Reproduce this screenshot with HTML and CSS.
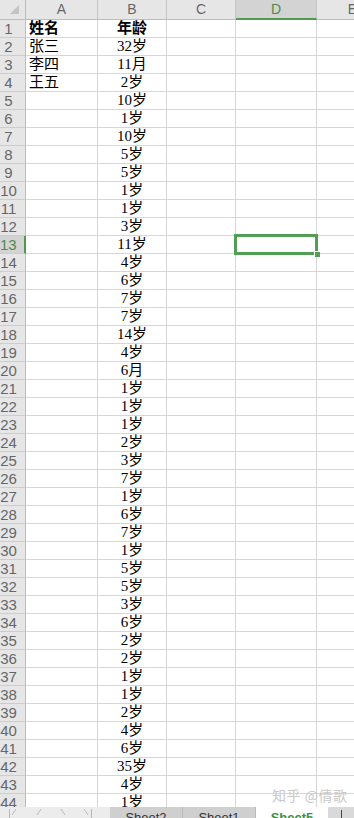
FILE: index.html
```html
<!DOCTYPE html>
<html lang="zh-CN">

<head>
    <meta charset="UTF-8">
    <meta name="viewport" content="width=device-width, initial-scale=1.0">
    <title>Sheet5</title>
    <link rel="stylesheet" href="styles.css">
</head>

<body>
    <div class="book">
        <div class="grid">
            <div class="row head">
                <div class="corner">
                    <svg width="26" height="19" viewBox="0 0 26 19"><polygon points="19,5 19,14 10,14" fill="#c4c4c4"/></svg>
                </div>
                <div class="ch">A</div>
                <div class="ch">B</div>
                <div class="ch">C</div>
                <div class="ch sel">D</div>
                <div class="ch">E</div>
            </div>
            <div class="row"><div class="rh">1</div><div class="c b">姓名</div><div class="c m b">年龄</div><div class="c"></div><div class="c"></div><div class="c"></div></div>
            <div class="row"><div class="rh">2</div><div class="c">张三</div><div class="c m">32岁</div><div class="c"></div><div class="c"></div><div class="c"></div></div>
            <div class="row"><div class="rh">3</div><div class="c">李四</div><div class="c m">11月</div><div class="c"></div><div class="c"></div><div class="c"></div></div>
            <div class="row"><div class="rh">4</div><div class="c">王五</div><div class="c m">2岁</div><div class="c"></div><div class="c"></div><div class="c"></div></div>
            <div class="row"><div class="rh">5</div><div class="c"></div><div class="c m">10岁</div><div class="c"></div><div class="c"></div><div class="c"></div></div>
            <div class="row"><div class="rh">6</div><div class="c"></div><div class="c m">1岁</div><div class="c"></div><div class="c"></div><div class="c"></div></div>
            <div class="row"><div class="rh">7</div><div class="c"></div><div class="c m">10岁</div><div class="c"></div><div class="c"></div><div class="c"></div></div>
            <div class="row"><div class="rh">8</div><div class="c"></div><div class="c m">5岁</div><div class="c"></div><div class="c"></div><div class="c"></div></div>
            <div class="row"><div class="rh">9</div><div class="c"></div><div class="c m">5岁</div><div class="c"></div><div class="c"></div><div class="c"></div></div>
            <div class="row"><div class="rh">10</div><div class="c"></div><div class="c m">1岁</div><div class="c"></div><div class="c"></div><div class="c"></div></div>
            <div class="row"><div class="rh">11</div><div class="c"></div><div class="c m">1岁</div><div class="c"></div><div class="c"></div><div class="c"></div></div>
            <div class="row"><div class="rh">12</div><div class="c"></div><div class="c m">3岁</div><div class="c"></div><div class="c"></div><div class="c"></div></div>
            <div class="row"><div class="rh sel">13</div><div class="c"></div><div class="c m">11岁</div><div class="c"></div><div class="c active"></div><div class="c"></div></div>
            <div class="row"><div class="rh">14</div><div class="c"></div><div class="c m">4岁</div><div class="c"></div><div class="c"></div><div class="c"></div></div>
            <div class="row"><div class="rh">15</div><div class="c"></div><div class="c m">6岁</div><div class="c"></div><div class="c"></div><div class="c"></div></div>
            <div class="row"><div class="rh">16</div><div class="c"></div><div class="c m">7岁</div><div class="c"></div><div class="c"></div><div class="c"></div></div>
            <div class="row"><div class="rh">17</div><div class="c"></div><div class="c m">7岁</div><div class="c"></div><div class="c"></div><div class="c"></div></div>
            <div class="row"><div class="rh">18</div><div class="c"></div><div class="c m">14岁</div><div class="c"></div><div class="c"></div><div class="c"></div></div>
            <div class="row"><div class="rh">19</div><div class="c"></div><div class="c m">4岁</div><div class="c"></div><div class="c"></div><div class="c"></div></div>
            <div class="row"><div class="rh">20</div><div class="c"></div><div class="c m">6月</div><div class="c"></div><div class="c"></div><div class="c"></div></div>
            <div class="row"><div class="rh">21</div><div class="c"></div><div class="c m">1岁</div><div class="c"></div><div class="c"></div><div class="c"></div></div>
            <div class="row"><div class="rh">22</div><div class="c"></div><div class="c m">1岁</div><div class="c"></div><div class="c"></div><div class="c"></div></div>
            <div class="row"><div class="rh">23</div><div class="c"></div><div class="c m">1岁</div><div class="c"></div><div class="c"></div><div class="c"></div></div>
            <div class="row"><div class="rh">24</div><div class="c"></div><div class="c m">2岁</div><div class="c"></div><div class="c"></div><div class="c"></div></div>
            <div class="row"><div class="rh">25</div><div class="c"></div><div class="c m">3岁</div><div class="c"></div><div class="c"></div><div class="c"></div></div>
            <div class="row"><div class="rh">26</div><div class="c"></div><div class="c m">7岁</div><div class="c"></div><div class="c"></div><div class="c"></div></div>
            <div class="row"><div class="rh">27</div><div class="c"></div><div class="c m">1岁</div><div class="c"></div><div class="c"></div><div class="c"></div></div>
            <div class="row"><div class="rh">28</div><div class="c"></div><div class="c m">6岁</div><div class="c"></div><div class="c"></div><div class="c"></div></div>
            <div class="row"><div class="rh">29</div><div class="c"></div><div class="c m">7岁</div><div class="c"></div><div class="c"></div><div class="c"></div></div>
            <div class="row"><div class="rh">30</div><div class="c"></div><div class="c m">1岁</div><div class="c"></div><div class="c"></div><div class="c"></div></div>
            <div class="row"><div class="rh">31</div><div class="c"></div><div class="c m">5岁</div><div class="c"></div><div class="c"></div><div class="c"></div></div>
            <div class="row"><div class="rh">32</div><div class="c"></div><div class="c m">5岁</div><div class="c"></div><div class="c"></div><div class="c"></div></div>
            <div class="row"><div class="rh">33</div><div class="c"></div><div class="c m">3岁</div><div class="c"></div><div class="c"></div><div class="c"></div></div>
            <div class="row"><div class="rh">34</div><div class="c"></div><div class="c m">6岁</div><div class="c"></div><div class="c"></div><div class="c"></div></div>
            <div class="row"><div class="rh">35</div><div class="c"></div><div class="c m">2岁</div><div class="c"></div><div class="c"></div><div class="c"></div></div>
            <div class="row"><div class="rh">36</div><div class="c"></div><div class="c m">2岁</div><div class="c"></div><div class="c"></div><div class="c"></div></div>
            <div class="row"><div class="rh">37</div><div class="c"></div><div class="c m">1岁</div><div class="c"></div><div class="c"></div><div class="c"></div></div>
            <div class="row"><div class="rh">38</div><div class="c"></div><div class="c m">1岁</div><div class="c"></div><div class="c"></div><div class="c"></div></div>
            <div class="row"><div class="rh">39</div><div class="c"></div><div class="c m">2岁</div><div class="c"></div><div class="c"></div><div class="c"></div></div>
            <div class="row"><div class="rh">40</div><div class="c"></div><div class="c m">4岁</div><div class="c"></div><div class="c"></div><div class="c"></div></div>
            <div class="row"><div class="rh">41</div><div class="c"></div><div class="c m">6岁</div><div class="c"></div><div class="c"></div><div class="c"></div></div>
            <div class="row"><div class="rh">42</div><div class="c"></div><div class="c m">35岁</div><div class="c"></div><div class="c"></div><div class="c"></div></div>
            <div class="row"><div class="rh">43</div><div class="c"></div><div class="c m">4岁</div><div class="c"></div><div class="c"></div><div class="c"></div></div>
            <div class="row"><div class="rh">44</div><div class="c"></div><div class="c m">1岁</div><div class="c"></div><div class="c"></div><div class="c"></div></div>
        </div>

        <div class="tabs">
            <div class="nav">
                <svg width="110" height="12" viewBox="0 0 110 12">
                    <g fill="none" stroke="#b8b8b8" stroke-width="1">
                        <path d="M9.5 2v10M16 2l-4 6"/>
                        <path d="M41 2l-4 6"/>
                        <path d="M61 2l4 6"/>
                        <path d="M84 2l4 6M91.5 2v10"/>
                    </g>
                </svg>
            </div>
            <div class="tab">Sheet2</div>
            <div class="tab">Sheet1</div>
            <div class="tab on">Sheet5</div>
            <div class="more"><span class="bar"></span></div>
        </div>

        <div class="mark">知乎 @倩歌</div>
    </div>
</body>

</html>
```

FILE: styles.css
```css
html, body {
    margin: 0;
    padding: 0;
    background: #fff;
}
body {
    width: 354px;
    height: 818px;
    overflow: hidden;
}
.book {
    position: relative;
    height: 818px;
    display: flex;
    flex-direction: column;
    overflow: hidden;
}
.grid {
    height: 807px;
    flex: none;
    overflow: hidden;
    font-family: "Liberation Serif", "Noto Sans CJK SC", serif;
    font-size: 15px;
    color: #000;
}
.row {
    display: grid;
    grid-template-columns: 26px 72px 69px 69px 81px 72px;
    height: 18px;
    width: 389px;
}
.row.head {
    height: 20px;
}
.c, .rh, .ch, .corner {
    box-sizing: border-box;
    border-right: 1px solid #d6d6d6;
    border-bottom: 1px solid #d6d6d6;
    white-space: nowrap;
    overflow: visible;
}
.c {
    line-height: 17px;
    padding-left: 3px;
}
.c.m {
    text-align: center;
    padding-left: 0;
}
.c.b {
    font-weight: bold;
}
.rh {
    background: #e6e6e6;
    border-right-color: #bdbdbd;
    border-bottom-color: #cdcdcd;
    font-family: "Liberation Sans", sans-serif;
    font-size: 15px;
    color: #666;
    line-height: 17px;
    text-align: center;
    padding-right: 8px;
}
.rh.sel {
    background: #d3d3d3;
    border-right: 2px solid #4f9a4f;
    color: #4f8a4f;
}
.corner {
    background: #e6e6e6;
    border-right-color: #bdbdbd;
    border-bottom-color: #bdbdbd;
}
.corner svg {
    display: block;
}
.ch {
    background: #e6e6e6;
    border-right-color: #c4c4c4;
    border-bottom-color: #bdbdbd;
    font-family: "Liberation Sans", sans-serif;
    font-size: 14px;
    color: #666;
    line-height: 19px;
    text-align: center;
}
.ch.sel {
    background: #d3d3d3;
    border-bottom: 2px solid #4f9a4f;
    color: #4f8a4f;
    line-height: 18px;
}
.c.active {
    position: relative;
}
.c.active::after {
    content: "";
    position: absolute;
    left: -2px;
    top: -2px;
    right: -2px;
    bottom: -2px;
    border: 3px solid #529e52;
}
.c.active::before {
    content: "";
    position: absolute;
    right: -4px;
    bottom: -4px;
    width: 5px;
    height: 5px;
    background: #529e52;
    border-left: 1px solid #fff;
    border-top: 1px solid #fff;
    z-index: 1;
}

.tabs {
    flex: none;
    display: flex;
    height: 26px;
    background: #e9e9e9;
    font-family: "Liberation Sans", sans-serif;
    font-size: 13px;
    color: #333;
}
.nav {
    width: 110px;
    flex: none;
    background: #ececec;
}
.nav svg {
    display: block;
}
.tab {
    width: 73px;
    flex: none;
    box-sizing: border-box;
    background: #cfcfcf;
    border-right: 1px solid #bababa;
    text-align: center;
    padding-top: 3px;
}
.tab.on {
    width: 72px;
    background: #fff;
    color: #3f8e3f;
    font-weight: bold;
    border-right: none;
}
.more {
    flex: 1;
    background: #d9d9d9;
    position: relative;
}
.more .bar {
    position: absolute;
    left: 13px;
    top: 3px;
    width: 1px;
    height: 12px;
    background: #444;
}
.mark {
    position: absolute;
    left: 272px;
    top: 785px;
    font-family: "Noto Sans CJK SC", sans-serif;
    font-size: 14px;
    color: #c9c9c9;
    letter-spacing: 0.5px;
}
```
